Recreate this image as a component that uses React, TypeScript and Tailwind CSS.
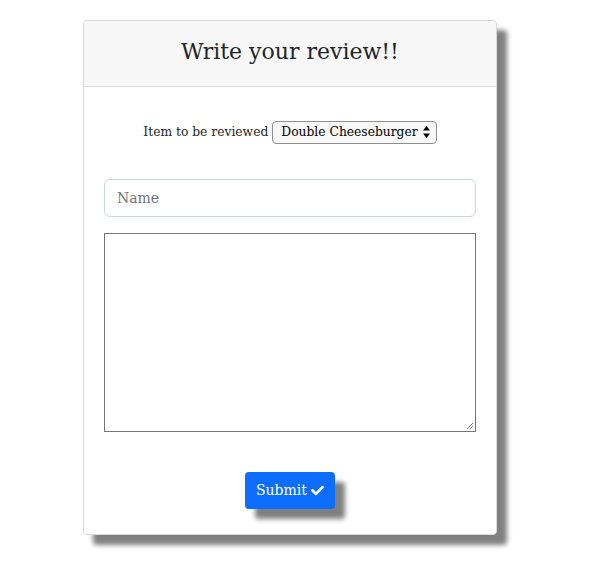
import React from "react";
import { FaCheck } from "react-icons/fa";

export default function App() {
  return (
    <div className="w-[609px] h-[585px] bg-white" style={{ fontFamily: '"DejaVu Serif", serif' }}>
      <div className="pt-[20px] pl-[83px]">
        <div className="w-[414px] h-[515px] bg-white border border-[#d9d9d9] rounded-[4px] shadow-[10px_10px_5px_#808080] flex flex-col">
          <div className="h-[66px] bg-[#f7f7f7] border-b border-[#d9d9d9] rounded-t-[4px] flex items-center justify-center">
            <h1 className="text-[22px] text-[#212529] leading-none pb-[3px]">Write your review!!</h1>
          </div>
          <div className="px-[20px] pt-[33px] flex flex-col">
            <div className="flex items-center justify-center gap-[4px] text-[12.3px] text-[#212529] h-[24px]">
              <span>Item to be reviewed</span>
              <div className="h-[23px] pl-[8px] pr-[6px] border border-[#8f8f8f] rounded-[4px] bg-[#f8f8f8] flex items-center gap-[5px] text-black">
                <span>Double Cheeseburger</span>
                <svg width="7" height="12" viewBox="0 0 7 12"><path d="M3.5 0L7 4.5H0z M3.5 12L0 7.5H7z" fill="#000" /></svg>
              </div>
            </div>
            <div className="mt-[35px] h-[38px] border border-[#ced4da] rounded-[6px] flex items-center px-[12px] text-[14px] text-[#6c757d]">
              Name
            </div>
            <div className="mt-[16px] h-[199px] border border-[#767676] relative">
              <svg className="absolute right-[1px] bottom-[1px]" width="9" height="9" viewBox="0 0 9 9">
                <path d="M8 2L2 8M8 5L5 8" stroke="#777" strokeWidth="1" />
              </svg>
            </div>
            <div className="mt-[40px] flex justify-center">
              <button className="w-[90px] h-[37px] bg-[#0d6efd] rounded-[4px] text-white text-[14px] flex items-center justify-center gap-[4px] shadow-[10px_10px_5px_#808080]">
                Submit
                <FaCheck size={13} />
              </button>
            </div>
          </div>
        </div>
      </div>
    </div>
  );
}
